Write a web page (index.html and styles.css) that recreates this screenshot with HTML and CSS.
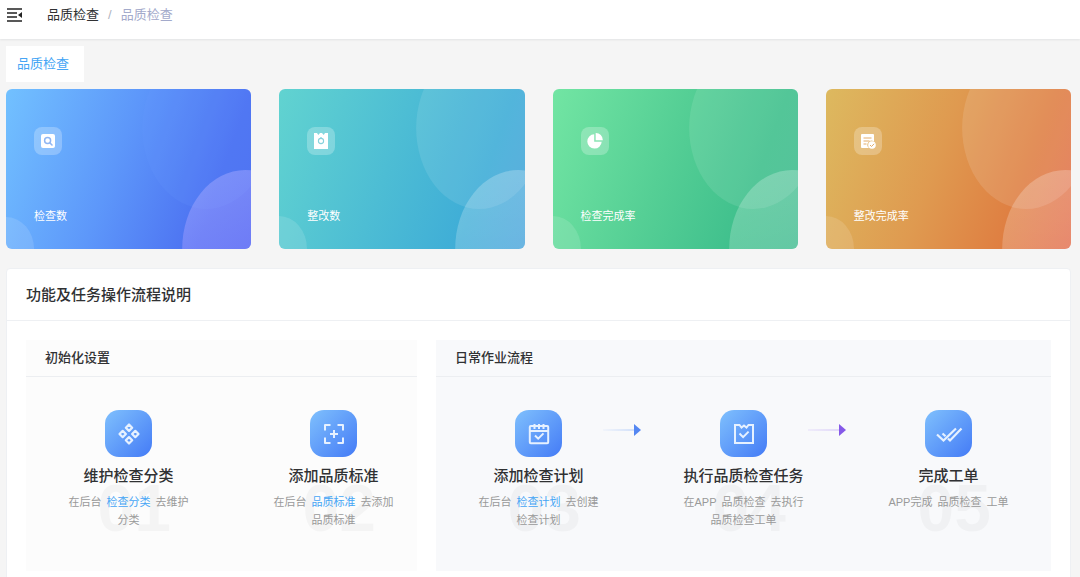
FILE: index.html
```html
<!DOCTYPE html>
<html lang="zh-CN">
<head>
<meta charset="utf-8">
<meta name="viewport" content="width=device-width, initial-scale=1">
<title>品质检查</title>
<link rel="stylesheet" href="styles.css">
</head>
<body>
<header class="topbar">
  <button class="menu-toggle" type="button" aria-label="折叠菜单">
    <svg width="16" height="14" viewBox="0 0 16 14"><path d="M0 1h15M0 5h10M0 9h10M0 13h15" stroke="#222" stroke-width="1.6" fill="none"/><path d="M15 4v6l-4-3z" fill="#222"/></svg>
  </button>
  <nav class="breadcrumb" aria-label="面包屑">
    <a class="crumb" href="#">品质检查</a>
    <span class="crumb-sep">/</span>
    <span class="crumb-current">品质检查</span>
  </nav>
</header>

<main class="page">
  <nav class="tabs"><a class="tab" href="#">品质检查</a></nav>

  <svg class="defs" width="0" height="0" aria-hidden="true">
    <defs>
      <linearGradient id="fade" x1="0.3" y1="0" x2="0.6" y2="1"><stop offset="0" stop-color="#fff" stop-opacity=".24"/><stop offset="1" stop-color="#fff" stop-opacity=".12"/></linearGradient>
      <linearGradient id="fade-violet" x1="0.3" y1="0" x2="0.6" y2="0.6"><stop offset="0" stop-color="#a5aaff" stop-opacity=".5"/><stop offset="1" stop-color="#9c8cff" stop-opacity=".4"/></linearGradient>
      <linearGradient id="line-blue"><stop offset="0" stop-color="#4f8bf5" stop-opacity=".04"/><stop offset="1" stop-color="#4f8bf5" stop-opacity=".22"/></linearGradient>
      <linearGradient id="line-violet"><stop offset="0" stop-color="#8a5cf0" stop-opacity=".08"/><stop offset="1" stop-color="#8a5cf0" stop-opacity=".2"/></linearGradient>
    </defs>
  </svg>

  <section class="stats">
    <article class="stat stat-blue">
      <svg class="stat-art" viewBox="0 0 245 160" preserveAspectRatio="none"><ellipse cx="200" cy="39" rx="64" ry="81" fill="#6a9cff" fill-opacity=".16"/><ellipse cx="239" cy="160" rx="63" ry="79" fill="url(#fade-violet)"/><ellipse cx="0" cy="160" rx="28" ry="32" fill="#fff" fill-opacity=".13"/></svg>
      <span class="stat-icon"><svg width="16" height="16" viewBox="0 0 16 16"><rect x="1" y="1" width="14" height="14" rx="2" fill="#fff"/><circle cx="7.6" cy="7.6" r="3" fill="none" stroke="#8fb6f3" stroke-width="1.5"/><path d="M10 10l2 2" stroke="#8fb6f3" stroke-width="1.6" stroke-linecap="round"/></svg></span>
      <h2 class="stat-label">检查数</h2>
    </article>
    <article class="stat stat-teal">
      <svg class="stat-art" viewBox="0 0 245 160" preserveAspectRatio="none"><ellipse cx="200" cy="39" rx="63" ry="81" fill="#fff" fill-opacity=".1"/><ellipse cx="239" cy="160" rx="63" ry="79" fill="url(#fade)"/><ellipse cx="0" cy="160" rx="28" ry="33" fill="#fff" fill-opacity=".13"/></svg>
      <span class="stat-icon"><svg width="16" height="16" viewBox="0 0 16 16"><path d="M1 0h3l1.3 2L7 0h2l1.700 2L12 0h3v16H1z" fill="#fff"/><circle cx="8" cy="8" r="2.600" fill="none" stroke="#86d2dc" stroke-width="1.100"/><path d="M8 4v2" stroke="#86d2dc" stroke-width="1.200"/></svg></span>
      <h2 class="stat-label">整改数</h2>
    </article>
    <article class="stat stat-green">
      <svg class="stat-art" viewBox="0 0 245 160" preserveAspectRatio="none"><ellipse cx="200" cy="39" rx="64" ry="81" fill="#fff" fill-opacity=".1"/><ellipse cx="239" cy="160" rx="63" ry="79" fill="url(#fade)"/><ellipse cx="0" cy="160" rx="28" ry="33" fill="#fff" fill-opacity=".13"/></svg>
      <span class="stat-icon"><svg width="16" height="16" viewBox="0 0 16 16"><path d="M7.200 1.200v7.600h7.500A7.200 7.200 0 1 1 7.200 1.200z" fill="#fff"/><path d="M8.700 0A7 7 0 0 1 15.800 7.200H8.700z" fill="#fff"/></svg></span>
      <h2 class="stat-label">检查完成率</h2>
    </article>
    <article class="stat stat-orange">
      <svg class="stat-art" viewBox="0 0 245 160" preserveAspectRatio="none"><ellipse cx="200" cy="39" rx="64" ry="81" fill="#fff" fill-opacity=".12"/><ellipse cx="239" cy="160" rx="63" ry="79" fill="url(#fade)"/><ellipse cx="0" cy="160" rx="28" ry="33" fill="#fff" fill-opacity=".13"/></svg>
      <span class="stat-icon"><svg width="16" height="16" viewBox="0 0 16 16"><path d="M2 1h11q1 0 1 1v6.500A4 4 0 0 0 9 15H2q-1 0-1-1V2q0-1 1-1z" fill="#fff"/><path d="M3.500 5h8M3.500 8h6M3.500 11h3" stroke="#e3ac69" stroke-width="1"/><circle cx="12" cy="12" r="3.800" fill="#fff"/><path d="M10 12l1.500 1.500 2.600-2.700" fill="none" stroke="#e3ac69" stroke-width="1"/></svg></span>
      <h2 class="stat-label">整改完成率</h2>
    </article>
  </section>

  <section class="guide">
    <h2 class="guide-title">功能及任务操作流程说明</h2>
    <div class="guide-body">
      <section class="phase phase-setup">
        <h3 class="phase-title">初始化设置</h3>
        <ol class="steps">
          <li class="step">
            <div class="step-head"><span class="step-icon"><svg width="24" height="24" viewBox="0 0 24 24" fill="none" stroke="#e6f1ff" stroke-width="2.200" stroke-linejoin="round"><path d="M12 2.500l3.200 3.200L12 8.900 8.800 5.700zM12 15.100l3.200 3.200L12 21.500l-3.200-3.200zM5.700 8.800l3.200 3.200-3.200 3.200L2.500 12zM18.300 8.800l3.200 3.200-3.200 3.200-3.200-3.200z"/></svg></span></div>
            <h4 class="step-title">维护检查分类</h4>
            <p class="step-text">在后台 <a class="term link" href="#">检查分类</a> 去维护分类</p>
            <span class="step-number">01</span>
          </li>
          <li class="step">
            <div class="step-head"><span class="step-icon"><svg width="24" height="24" viewBox="0 0 24 24" fill="none" stroke="#e6f1ff" stroke-width="2" stroke-linejoin="round"><path d="M3 8.500V3h5.500M15.500 3H21v5.500M21 15.500V21h-5.500M8.500 21H3v-5.500M12 8v8M8 12h8"/></svg></span></div>
            <h4 class="step-title">添加品质标准</h4>
            <p class="step-text">在后台 <a class="term link" href="#">品质标准</a> 去添加品质标准</p>
            <span class="step-number">02</span>
          </li>
        </ol>
      </section>
      <section class="phase phase-daily">
        <h3 class="phase-title">日常作业流程</h3>
        <ol class="steps">
          <li class="step">
            <div class="step-head"><span class="step-icon"><svg width="24" height="24" viewBox="0 0 24 24" fill="none" stroke="#e6f1ff" stroke-width="2"><rect x="2.800" y="4" width="18.400" height="17.200" rx="1"/><path d="M3 9h18M7.500 2v5M12 2v5M16.500 2v5M8 13.500l3.200 3.200 5.300-5.300"/></svg></span>
              <svg class="arrow" width="38" height="40" viewBox="0 0 38 40"><rect y="19" width="31" height="2" fill="url(#line-blue)"/><path d="M31 14l7 6-7 6z" fill="#5487f2"/></svg></div>
            <h4 class="step-title">添加检查计划</h4>
            <p class="step-text">在后台 <a class="term link" href="#">检查计划</a> 去创建检查计划</p>
            <span class="step-number">03</span>
          </li>
          <li class="step">
            <div class="step-head"><span class="step-icon"><svg width="24" height="24" viewBox="0 0 24 24" fill="none" stroke="#e6f1ff" stroke-width="2"><path d="M3 3h4.500l2 2.500L12 3.500l2.500 2L16.500 3H21v18H3zM7.500 11.500l3.600 3.600 5.500-5.500"/></svg></span>
              <svg class="arrow" width="38" height="40" viewBox="0 0 38 40"><rect y="19" width="31" height="2" fill="url(#line-violet)"/><path d="M31 14l7 6-7 6z" fill="#8559e8"/></svg></div>
            <h4 class="step-title">执行品质检查任务</h4>
            <p class="step-text">在APP <span class="term">品质检查</span> 去执行品质检查工单</p>
            <span class="step-number">04</span>
          </li>
          <li class="step">
            <div class="step-head"><span class="step-icon"><svg width="28" height="24" viewBox="0 0 28 24" fill="none" stroke="#e6f1ff" stroke-width="2.200"><path d="M2 12.500l6.500 6L21 6.500M7.500 11.500l3 2.800M13 16.500l2 2L26.500 6.500"/></svg></span></div>
            <h4 class="step-title">完成工单</h4>
            <p class="step-text">APP完成 <span class="term">品质检查</span> 工单</p>
            <span class="step-number">05</span>
          </li>
        </ol>
      </section>
    </div>
  </section>
</main>
</body>
</html>
```
FILE: styles.css
```css
* {
  box-sizing: border-box;
}

body {
  margin: 0;
  background: #f5f5f5;
  color: #303133;
  font-family: "Liberation Sans", "Noto Sans CJK SC", sans-serif;
  font-size: 13px;
  line-height: 20px;
}

h2, h3, h4, p, ol {
  margin: 0;
  padding: 0;
}

ol {
  list-style: none;
}

a {
  color: inherit;
  text-decoration: none;
}

svg {
  display: block;
}

.defs {
  position: absolute;
}

.topbar {
  display: flex;
  align-items: center;
  gap: 24px;
  height: 39px;
  padding: 0 7px 9px;
  background: #fff;
  box-shadow: 0 1px 2px rgba(0, 21, 41, 0.08);
}

.menu-toggle {
  padding: 0;
  border: 0;
  background: none;
  cursor: pointer;
}

.breadcrumb {
  display: flex;
  gap: 9px;
}

.crumb-sep {
  color: #b0b4c0;
}

.crumb-current {
  color: #a3aacb;
}

.page {
  padding: 7px 9px 19px 6px;
}

.tabs {
  display: flex;
  margin-bottom: 7px;
}

.tab {
  padding: 8px 15px 8px 11px;
  background: #fff;
  color: #45a5f5;
}

.stats {
  display: grid;
  grid-template-columns: repeat(4, 1fr);
  gap: 28px;
  margin-bottom: 19px;
}

.stat {
  position: relative;
  display: flex;
  flex-direction: column;
  justify-content: space-between;
  height: 160px;
  padding: 38px 28px 24px;
  border-radius: 6px;
  overflow: hidden;
  color: #fff;
}

.stat-blue {
  background: linear-gradient(110deg, #72c1ff 0%, #5d97fa 45%, #4c70f1 82%, #4c6cf0 100%);
}

.stat-teal {
  background: linear-gradient(110deg, #61d3d0 0%, #4dbdd4 45%, #3fadd7 78%, #4ba5dc 100%);
}

.stat-green {
  background: linear-gradient(110deg, #72e5a3 0%, #55cf95 45%, #40c08d 78%, #43bc91 100%);
}

.stat-orange {
  background: linear-gradient(110deg, #ddb95f 0%, #df9a50 45%, #df7f42 76%, #e36f4f 100%);
}

.stat-art {
  position: absolute;
  inset: 0;
  width: 100%;
  height: 100%;
}

.stat-icon {
  position: relative;
  display: grid;
  place-items: center;
  width: 28px;
  height: 28px;
  border-radius: 8px;
  background: rgba(255, 255, 255, 0.25);
}

.stat-label {
  position: relative;
  font-size: 11px;
  font-weight: 400;
  line-height: 18px;
}

.guide {
  border: 1px solid #eef0f3;
  border-radius: 4px;
  background: #fff;
}

.guide-title {
  padding: 16px 19px 15px;
  border-bottom: 1px solid #eef0f3;
  font-size: 15px;
  font-weight: 500;
  line-height: 20px;
}

.guide-body {
  display: grid;
  grid-template-columns: 2fr 3fr;
  padding: 19px;
}

.phase {
  min-height: 231px;
}

.phase-setup {
  margin-right: 19px;
  background: #fcfcfc;
}

.phase-daily {
  background: #f8f9fb;
}

.phase-title {
  padding: 8px 19px;
  border-bottom: 1px solid #eceef1;
  font-size: 13px;
  font-weight: 500;
  line-height: 20px;
}

.steps {
  display: grid;
  grid-auto-flow: column;
  grid-auto-columns: 1fr;
  padding: 33px 0;
}

.phase-setup .steps {
  margin-right: -19px;
}

.step {
  position: relative;
  display: flex;
  flex-direction: column;
  align-items: center;
  text-align: center;
}

.step-head {
  display: grid;
  grid-template-columns: 1fr auto 1fr;
  align-self: stretch;
}

.step-icon {
  grid-column: 2;
  display: grid;
  place-items: center;
  width: 47px;
  height: 47px;
  border-radius: 14px;
  background: linear-gradient(135deg, #7fc0fd, #447bf6);
}

.arrow {
  justify-self: end;
}

.step-title {
  position: relative;
  z-index: 1;
  margin: 8px 0 6px;
  font-size: 15px;
  font-weight: 500;
  line-height: 22px;
}

.step-text {
  position: relative;
  z-index: 1;
  max-width: 125px;
  color: #999;
  font-size: 11px;
  line-height: 18px;
}

.term {
  margin: 0 2px;
}

.link {
  color: #45a5f5;
}

.step-number {
  position: absolute;
  top: 65px;
  left: 50%;
  margin-left: -31px;
  color: rgba(0, 0, 0, 0.03);
  font-size: 66px;
  font-weight: 700;
  line-height: 66px;
}
```
